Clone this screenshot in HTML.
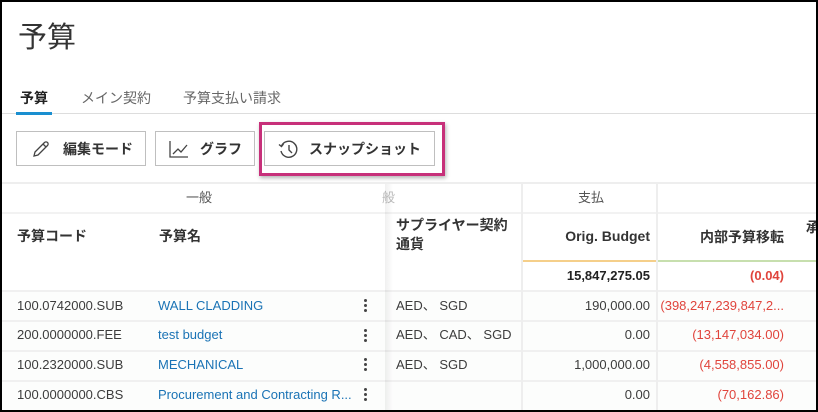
<!DOCTYPE html>
<html><head><meta charset="utf-8"><style>
*{box-sizing:border-box;margin:0;padding:0}
body{width:818px;height:412px;overflow:hidden;background:#fff;font-family:"Liberation Sans","Noto Sans CJK JP",sans-serif;color:#3c3c3c;position:relative}
.frame{position:absolute;left:0;top:0;width:818px;height:412px;border:2px solid #000;pointer-events:none;z-index:20}
.abs{position:absolute;white-space:nowrap}
h1{position:absolute;left:18px;top:14px;font-size:29px;font-weight:400;color:#333}
.tab{position:absolute;top:88px;font-size:14px;color:#666}
.btn{position:absolute;top:131px;height:35px;border:1px solid #bfbfbf;background:#fff;font-size:14px;font-weight:bold;color:#333;display:flex;align-items:center}
.row{position:absolute;left:2px;width:814px;border-bottom:2px solid #f0f0f0;background:#fcfdfc}
.c{position:absolute;font-size:13px;white-space:nowrap;line-height:18px}
.r{text-align:right}
.link{color:#1a73b5}
.red{color:#e0443c}
.dots{position:absolute;left:364px;width:3px}
.dots i{display:block;width:3px;height:3px;background:#444;border-radius:50%;margin-bottom:2px}
</style></head><body>
<div class="frame"></div>
<h1>予算</h1>
<div class="tab" style="left:20px;color:#222;font-weight:bold">予算</div>
<div class="tab" style="left:81px">メイン契約</div>
<div class="tab" style="left:183px">予算支払い請求</div>
<div class="abs" style="left:2px;top:113px;width:814px;height:1px;background:#ddd"></div>
<div class="abs" style="left:16px;top:112px;width:36px;height:3px;background:#1a8fd0"></div>

<div class="btn" style="left:16px;width:130px;padding-left:14px">
<svg width="20" height="20" viewBox="0 0 20 20" fill="none" stroke="#444" stroke-width="1.3"><path d="M3 17l1-4L13.5 3.5a2 2 0 0 1 3 3L7 16z M12 5l3 3"/></svg>
<span style="margin-left:12px">編集モード</span></div>
<div class="btn" style="left:155px;width:100px;padding-left:12px">
<svg width="22" height="20" viewBox="0 0 22 20" fill="none" stroke="#444" stroke-width="1.3"><path d="M2 2v16h18 M5 15l5-5 3 3 6-7"/></svg>
<span style="margin-left:10px">グラフ</span></div>
<div class="abs" style="left:259px;top:122px;width:186px;height:54px;border:3px solid #c7307a;box-shadow:1px 2px 4px rgba(0,0,0,.3)"></div>
<div class="btn" style="left:264px;width:171px;padding-left:12px">
<svg width="22" height="22" viewBox="0 0 22 22" fill="none" stroke="#444" stroke-width="1.4"><path d="M4.5 8A8 8 0 1 1 4 13"/><path d="M2 6.5l2.5 2 2-2.5" /><path d="M12 7v5l3 3"/></svg>
<span style="margin-left:10px">スナップショット</span></div>

<div class="abs" style="left:2px;top:182px;width:814px;height:2px;background:#eee"></div>
<div class="abs" style="left:2px;top:212px;width:814px;height:2px;background:#f2f2f2"></div>
<div class="c" style="left:186px;top:189px;color:#555">一般</div>
<div class="c" style="left:382px;top:189px;color:#bbb">般</div>
<div class="c" style="left:578px;top:189px;color:#555">支払</div>
<div class="c" style="left:17px;top:227px;font-size:14px;font-weight:bold;color:#333">予算コード</div>
<div class="c" style="left:159px;top:227px;font-size:14px;font-weight:bold;color:#333">予算名</div>
<div class="c" style="left:396px;top:216px;font-size:14px;font-weight:bold;color:#333;line-height:19px">サプライヤー契約<br>通貨</div>
<div class="c r" style="left:523px;width:127px;top:227px;font-size:14px;font-weight:bold;color:#333">Orig. Budget</div>
<div class="c r" style="left:658px;width:126px;top:228px;font-size:14px;font-weight:bold;color:#333">内部予算移転</div>
<div class="c" style="left:806px;top:218px;font-size:14px;font-weight:bold;color:#333">承</div>
<div class="abs" style="left:523px;top:260px;width:134px;height:2px;background:#f5cf8a"></div>
<div class="abs" style="left:658px;top:260px;width:158px;height:2px;background:#c7dfae"></div>

<div class="row" style="top:262px;height:30px;background:#fff"></div>
<div class="c r" style="left:523px;width:127px;top:267px;font-weight:bold;color:#222">15,847,275.05</div>
<div class="c r red" style="left:658px;width:126px;top:267px;font-weight:bold">(0.04)</div>

<div class="row" style="top:292px;height:30px"></div>
<div class="c" style="left:17px;top:297px">100.0742000.SUB</div>
<div class="c link" style="left:158px;top:297px">WALL CLADDING</div>
<div class="dots" style="top:299px"><i></i><i></i><i></i></div>
<div class="c" style="left:396px;top:297px">AED、 SGD</div>
<div class="c r" style="left:523px;width:127px;top:297px">190,000.00</div>
<div class="c r red" style="left:658px;width:126px;top:297px">(398,247,239,847,2...</div>

<div class="row" style="top:322px;height:30px"></div>
<div class="c" style="left:17px;top:326px">200.0000000.FEE</div>
<div class="c link" style="left:158px;top:326px">test budget</div>
<div class="dots" style="top:329px"><i></i><i></i><i></i></div>
<div class="c" style="left:396px;top:326px">AED、 CAD、 SGD</div>
<div class="c r" style="left:523px;width:127px;top:326px">0.00</div>
<div class="c r red" style="left:658px;width:126px;top:326px">(13,147,034.00)</div>

<div class="row" style="top:352px;height:30px"></div>
<div class="c" style="left:17px;top:356px">100.2320000.SUB</div>
<div class="c link" style="left:158px;top:356px">MECHANICAL</div>
<div class="dots" style="top:358px"><i></i><i></i><i></i></div>
<div class="c" style="left:396px;top:356px">AED、 SGD</div>
<div class="c r" style="left:523px;width:127px;top:356px">1,000,000.00</div>
<div class="c r red" style="left:658px;width:126px;top:356px">(4,558,855.00)</div>

<div class="row" style="top:382px;height:30px;border:none"></div>
<div class="c" style="left:17px;top:386px">100.0000000.CBS</div>
<div class="c link" style="left:158px;top:386px">Procurement and Contracting R...</div>
<div class="dots" style="top:388px"><i></i><i></i><i></i></div>
<div class="c r" style="left:523px;width:127px;top:386px">0.00</div>
<div class="c r red" style="left:658px;width:126px;top:386px">(70,162.86)</div>

<div class="abs" style="left:385px;top:184px;width:8px;height:226px;background:linear-gradient(to right,rgba(0,0,0,.06),rgba(0,0,0,0))"></div>
<div class="abs" style="left:521px;top:184px;width:2px;height:226px;background:#eee"></div>
<div class="abs" style="left:656px;top:184px;width:2px;height:226px;background:#eee"></div>
</body></html>
